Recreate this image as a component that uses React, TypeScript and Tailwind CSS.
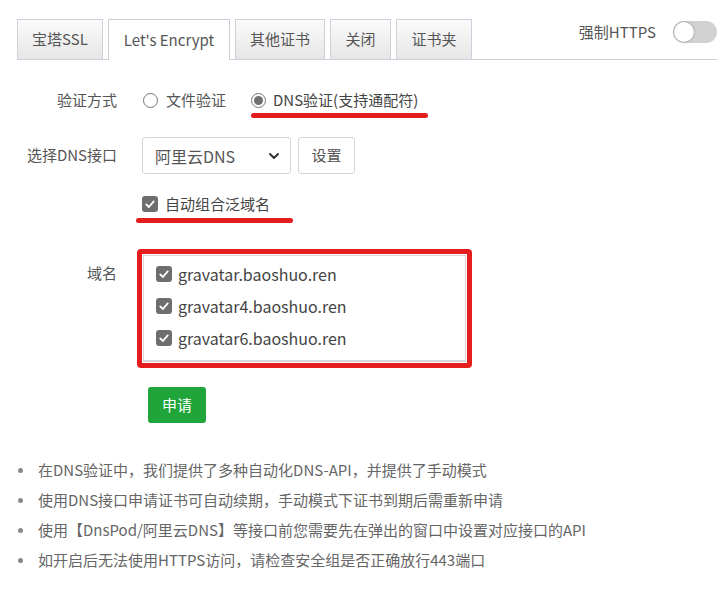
import { ChevronDown } from "lucide-react";

const tabs = [
  { label: "宝塔SSL", w: "w-[86px]" },
  { label: "Let's Encrypt", w: "w-[122px]", active: true },
  { label: "其他证书", w: "w-[90px]" },
  { label: "关闭", w: "w-[61px]" },
  { label: "证书夹", w: "w-[76px]" },
];

const domains = ["gravatar.baoshuo.ren", "gravatar4.baoshuo.ren", "gravatar6.baoshuo.ren"];

const tips = [
  "在DNS验证中，我们提供了多种自动化DNS-API，并提供了手动模式",
  "使用DNS接口申请证书可自动续期，手动模式下证书到期后需重新申请",
  "使用【DnsPod/阿里云DNS】等接口前您需要先在弹出的窗口中设置对应接口的API",
  "如开启后无法使用HTTPS访问，请检查安全组是否正确放行443端口",
];

function Check({ size = "w-4 h-4" }: { size?: string }) {
  return (
    <span className={`${size} rounded-[3px] bg-[#6e6e6e] flex items-center justify-center shrink-0`}>
      <svg viewBox="0 0 16 16" className="w-[12px] h-[12px]">
        <path d="M3 8.5 L6.5 12 L13 4.5" fill="none" stroke="#fff" strokeWidth="2.4" strokeLinecap="round" strokeLinejoin="round" />
      </svg>
    </span>
  );
}

function Radio({ checked }: { checked?: boolean }) {
  return (
    <span className="w-[15px] h-[15px] rounded-full border border-[#767676] bg-white flex items-center justify-center shrink-0">
      {checked && <span className="w-[9px] h-[9px] rounded-full bg-[#707070]" />}
    </span>
  );
}

export default function App() {
  return (
    <div
      className="relative w-[722px] h-[597px] bg-white overflow-hidden text-[#555]"
      style={{ fontFamily: '"Noto Sans CJK SC", "Noto Sans", sans-serif' }}
    >
      {/* tabs */}
      <div className="ml-[17px] mr-[5px] pt-[18px] flex items-start border-b border-[#cfcfdc]">
        <div className="flex gap-[5px] items-end h-[41px]">
          {tabs.map((t) =>
            t.active ? (
              <div
                key={t.label}
                className={`${t.w} h-[41px] -mb-px bg-white border border-b-0 border-[#cfcfdc] flex items-center justify-center text-[15px] text-[#555]`}
              >
                {t.label}
              </div>
            ) : (
              <div
                key={t.label}
                className={`${t.w} h-[40px] bg-gradient-to-b from-[#fbfbfb] to-[#e6e6e6] border border-b-0 border-[#cfcfdc] flex items-center justify-center text-[15px] text-[#555]`}
              >
                {t.label}
              </div>
            )
          )}
        </div>
        <div className="ml-auto flex items-center gap-[17px] mt-[3px]">
          <span className="text-[15px] text-[#555]">强制HTTPS</span>
          <span className="w-[44px] h-[22px] rounded-full bg-[#d2d2d2] flex items-center px-[1px]">
            <span className="w-[20px] h-[20px] rounded-full bg-white shadow-[0_0_2px_rgba(0,0,0,0.5)]" />
          </span>
        </div>
      </div>

      {/* form */}
      <div className="flex flex-col mt-[22px]">
        <div className="flex items-center h-[36px]">
          <div className="w-[117px] text-right text-[15px]">验证方式</div>
          <div className="ml-[26px] flex items-center">
            <Radio />
            <span className="ml-[8px] text-[15px]">文件验证</span>
            <span className="relative ml-[25px] flex items-center">
              <Radio checked />
              <span className="ml-[7px] text-[15px] text-[#444]">DNS验证(支持通配符)</span>
              <span className="absolute left-0 top-[24px] w-[177px] h-[5px] rounded-full bg-[#e61d1d]" />
            </span>
          </div>
        </div>

        <div className="flex items-center mt-[19px]">
          <div className="w-[117px] text-right text-[15px]">选择DNS接口</div>
          <div className="ml-[25px] flex items-center gap-[7px]">
            <div className="w-[149px] h-[37px] border border-[#d6d6d6] rounded-[3px] flex items-center justify-between pl-[12px] pr-[8px] text-[16px] text-[#555]">
              <span>阿里云DNS</span>
              <ChevronDown size={16} strokeWidth={3} className="text-[#333]" />
            </div>
            <div className="w-[57px] h-[37px] border border-[#d6d6d6] rounded-[3px] flex items-center justify-center text-[15px]">
              设置
            </div>
          </div>
        </div>

        <div className="flex items-center h-[30px] mt-[15px]">
          <div className="w-[117px]" />
          <div className="relative ml-[25px] flex items-center">
            <Check />
            <span className="ml-[7px] text-[15px] text-[#444]">自动组合泛域名</span>
            <span className="absolute left-[-6px] top-[25px] w-[157px] h-[5px] rounded-full bg-[#e61d1d]" />
          </div>
        </div>

        <div className="flex items-start mt-[30px]">
          <div className="w-[117px] text-right text-[15px] mt-[13px]">域名</div>
          <div className="ml-[20px] border-[5px] border-[#e61d1d] rounded-[4px] p-px">
            <div className="w-[323px] h-[107px] border border-[#d8d8d8] border-b-[2px] flex flex-col gap-[12px] pl-[12px] pt-[8px]">
              {domains.map((d) => (
                <div key={d} className="flex items-center h-[20px]">
                  <Check />
                  <span className="ml-[6px] text-[16px] text-[#444]">{d}</span>
                </div>
              ))}
            </div>
          </div>
        </div>

        <div className="flex mt-[19px]">
          <div className="w-[117px]" />
          <button className="ml-[31px] w-[58px] h-[36px] rounded-[3px] bg-[#20a53a] text-white text-[15px]">
            申请
          </button>
        </div>

        <ul className="mt-[32px] ml-[18px] flex flex-col">
          {tips.map((t) => (
            <li key={t} className="flex items-center h-[30px] text-[15px] text-[#666]">
              <span className="w-[5px] h-[5px] rounded-full bg-[#888] mr-[15px]" />
              {t}
            </li>
          ))}
        </ul>
      </div>
    </div>
  );
}
